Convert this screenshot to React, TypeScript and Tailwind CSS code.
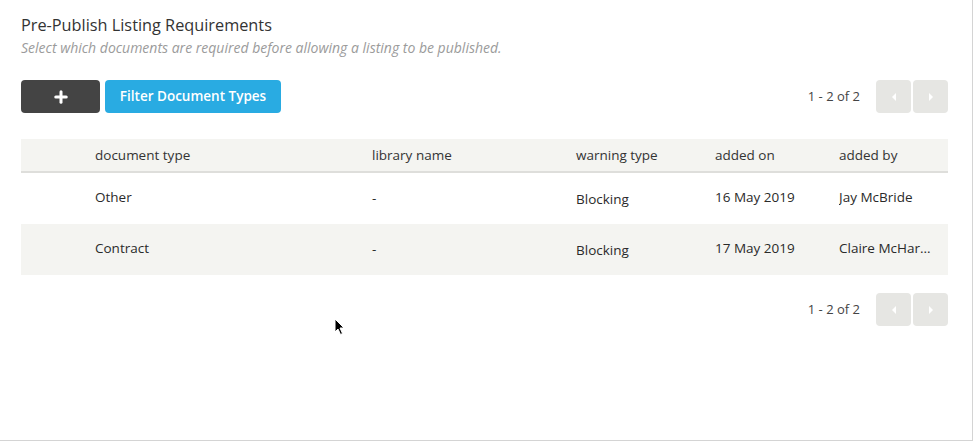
import { Plus } from "lucide-react";

const font = { fontFamily: "'Open Sans', Lato, sans-serif" };

const rows = [
  { type: "Other", library: "-", warning: "Blocking", added: "16 May 2019", by: "Jay McBride" },
  { type: "Contract", library: "-", warning: "Blocking", added: "17 May 2019", by: "Claire McHar..." },
];

function Pager() {
  return (
    <div className="flex items-center">
      <span className="mr-4 text-[13px] text-[#444]">1 - 2 of 2</span>
      <button className="flex h-[33px] w-[35px] items-center justify-center rounded-sm bg-[#e6e6e3]">
        <span className="h-0 w-0 border-y-[4px] border-r-[4px] border-y-transparent border-r-white" />
      </button>
      <button className="ml-[2px] flex h-[33px] w-[35px] items-center justify-center rounded-sm bg-[#e6e6e3]">
        <span className="h-0 w-0 border-y-[4px] border-l-[4px] border-y-transparent border-l-white" />
      </button>
    </div>
  );
}

function Cursor() {
  return (
    <svg className="absolute left-[334px] top-[318px]" width="12" height="18" viewBox="0 0 12 18">
      <path d="M1 1 L1 14 L4 11 L6.5 16.5 L8.5 15.5 L6 10 L10 10 Z" fill="#000" stroke="#fff" strokeWidth="1" />
    </svg>
  );
}

export default function App() {
  return (
    <div className="relative h-[442px] w-[974px] overflow-hidden bg-white" style={font}>
      <div className="h-[441px] w-[973px] border-b border-r border-[#d4d4d4] px-[21px] pt-[15px]">
        <h1 className="text-[16.3px] leading-[21px] text-[#333]">Pre-Publish Listing Requirements</h1>
        <p className="mt-[2px] text-[14px] italic leading-[19px] text-[#9b9b9b]">
          Select which documents are required before allowing a listing to be published.
        </p>

        <div className="mt-[23px] flex items-center justify-between pr-[3px]">
          <div className="flex gap-[5px]">
            <button className="flex h-[33px] w-[79px] items-center justify-center rounded-sm bg-[#444]">
              <Plus className="h-[18px] w-[18px] text-white" strokeWidth={4} />
            </button>
            <button className="h-[33px] w-[176px] rounded-sm bg-[#29abe2] text-[13.5px] font-semibold text-white">
              Filter Document Types
            </button>
          </div>
          <Pager />
        </div>

        <div className="mr-[3px] mt-[26px] text-[13.5px] text-[#333]">
          <div className="flex h-[34px] items-center border-b-2 border-[#dededb] bg-[#f4f4f1]">
            <div className="w-[74px]" />
            <div className="w-[277px]">document type</div>
            <div className="w-[204px]">library name</div>
            <div className="w-[139px]">warning type</div>
            <div className="w-[124px]">added on</div>
            <div className="flex-1">added by</div>
          </div>
          {rows.map((r, i) => (
            <div key={r.type} className={`flex h-[51px] items-center text-[#2a2a2a] ${i % 2 ? "bg-[#f4f4f1]" : "bg-white"}`}>
              <div className="w-[74px]" />
              <div className="w-[277px] pb-[2px]">{r.type}</div>
              <div className="w-[204px]">{r.library}</div>
              <div className="w-[139px] pt-[1px]">{r.warning}</div>
              <div className="w-[124px] pb-[2px]">{r.added}</div>
              <div className="flex-1 truncate pb-[2px]">{r.by}</div>
            </div>
          ))}
        </div>

        <div className="mt-[18px] flex justify-end pr-[3px]">
          <Pager />
        </div>
      </div>
      <Cursor />
    </div>
  );
}
